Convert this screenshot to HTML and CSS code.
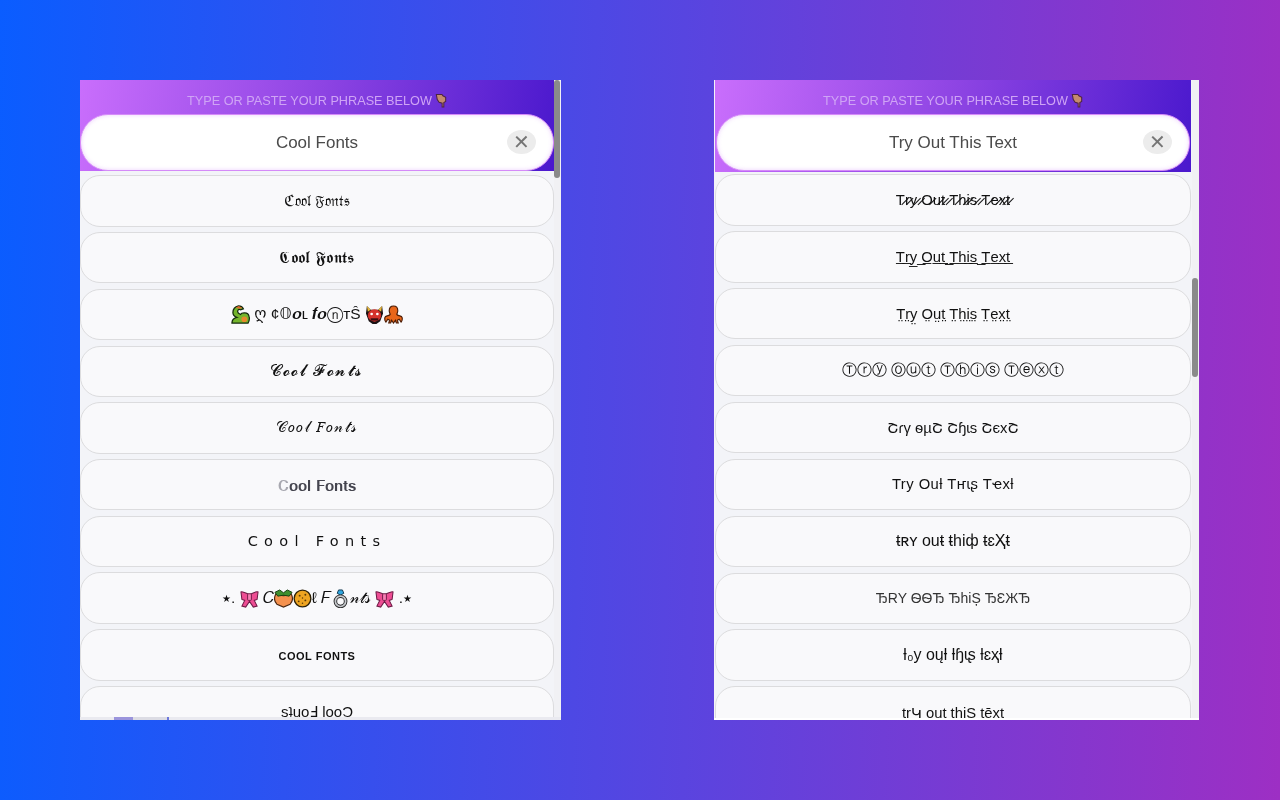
FILE: index.html
```html
<!DOCTYPE html>
<html lang="en">
<head>
<meta charset="utf-8">
<title>Cool Fonts</title>
<link rel="stylesheet" href="styles.css">
</head>
<body>
<svg class="defs" aria-hidden="true" width="0" height="0">
  <symbol id="hand" viewBox="0 0 12 16"><path d="M1 1.500h6l1 1.500 3 1.500V9l-2 1.200V15H7.200v-4.200L4 10 2 7z" fill="#c58a6e" stroke="#4d2440" stroke-width="1.1"/></symbol>
  <symbol id="dragon" viewBox="0 0 20 20"><path d="M1 19c0-3 1-5 5-6-3-1-4-3-4-5 0-3 2-6 6-7 2 0 4 1 5 3l-3 1c-2-1-3 0-3 2 0 1 1 2 3 3 1-2 8-3 9 2 1 3 0 5-1 7z" fill="#74b52c" stroke="#12280a" stroke-width="1.3"/><path d="M5 3l3-2 4 2-3 1z" fill="#e0642a"/><circle cx="14" cy="15" r="3" fill="#e8892b"/></symbol>
  <symbol id="ogre" viewBox="0 0 20 20"><path d="M2 1l4 4h8l4-4 1 8-3 8-4 3H8l-4-3-3-8z" fill="#1a1214"/><path d="M2 1l4 4-3 2zM18 1l-4 4 3 2z" fill="#e9b83a"/><ellipse cx="10" cy="11" rx="7" ry="6.500" fill="#d4322c"/><circle cx="7" cy="9.500" r="1.400" fill="#fff"/><circle cx="13" cy="9.500" r="1.400" fill="#fff"/><path d="M6 14h8v2.400H6z" fill="#3a0d10"/></symbol>
  <symbol id="octopus" viewBox="0 0 20 20"><path d="M10 1c3 0 4.500 2 4.500 5 0 2-1 3-1 4 2 2 5 1 5.500 3 .5 2 0 4-1 5l-2-3-2 1 1 3-2 0-1-3-2 3-2-3-1 3-2 0 1-3-2-1-2 3c-1-1-1.500-3-1-5 .5-2 3.500-1 5.500-3 0-1-1-2-1-4 0-3 1.500-5 4.500-5z" fill="#e8661a" stroke="#4a1c06" stroke-width="1.200"/></symbol>
  <symbol id="bow" viewBox="0 0 20 20"><path d="M10 6C7 5 3 2 1 3l1 8 3 1-3 6 4 1 4-6 4 6 4-1-3-6 3-1 1-8c-2-1-6 2-9 3z" fill="#ee4d93" stroke="#6d1a45" stroke-width="1.100"/><rect x="8" y="5" width="4" height="7" rx="1" fill="#f77fb4" stroke="#6d1a45"/></symbol>
  <symbol id="peach" viewBox="0 0 20 20"><path d="M2 5c2 1 5 2 8 2s6-1 8-2c2 4 2 8-1 11l-7 3-7-3C0 13 0 9 2 5z" fill="#f4914e" stroke="#4a2610" stroke-width="1.200"/><path d="M1 3.500L6 1l4 3 4-3 5 2.500-3 4-6-1-6 1z" fill="#3f8f2f" stroke="#173f12" stroke-width="1"/></symbol>
  <symbol id="cookie" viewBox="0 0 20 20"><circle cx="10" cy="10" r="8.800" fill="#eea421" stroke="#2e2208" stroke-width="1.400"/><circle cx="7" cy="7" r="1" fill="#5a3a08"/><circle cx="13" cy="6" r="1" fill="#5a3a08"/><circle cx="13" cy="12" r="1" fill="#5a3a08"/><circle cx="6" cy="13" r="1" fill="#5a3a08"/><circle cx="10" cy="9.500" r=".8" fill="#5a3a08"/><circle cx="10" cy="15" r=".8" fill="#5a3a08"/></symbol>
  <symbol id="ring" viewBox="0 0 20 20"><path d="M6.500 4.500L8 1h4l1.500 3.500L10 6.500z" fill="#2fa6e0" stroke="#123a52"/><circle cx="10" cy="13" r="5.400" fill="none" stroke="#2e2e2e" stroke-width="3.800"/><circle cx="10" cy="13" r="5.400" fill="none" stroke="#c4c7cb" stroke-width="1.800"/></symbol>
</svg>
<main class="stage">
  <section class="panel panel-left">
    <div class="app">
      <header class="hero">
        <p class="hero-title">TYPE OR PASTE YOUR PHRASE BELOW<svg class="hand"><use href="#hand"/></svg></p>
        <div class="pill"><span class="pill-text">Cool Fonts</span><button class="clear" type="button">✕</button></div>
      </header>
      <ul class="list">
        <li class="row row-frak">ℭ𝔬𝔬𝔩 𝔉𝔬𝔫𝔱𝔰</li>
        <li class="row row-frakbold">𝕮𝖔𝖔𝖑 𝕱𝖔𝖓𝖙𝖘</li>
        <li class="row row-mix"><svg class="emo"><use href="#dragon"/></svg> ღ ¢𝕆𝒐ʟ 𝒇𝒐ⓝᴛŜ <svg class="emo"><use href="#ogre"/></svg> <svg class="emo"><use href="#octopus"/></svg></li>
        <li class="row row-script">𝓒𝓸𝓸𝓵 𝓕𝓸𝓷𝓽𝓼</li>
        <li class="row row-script row-script-light">𝒞𝑜𝑜𝓁 𝐹𝑜𝓃𝓉𝓈</li>
        <li class="row row-shade"><span class="fade">𝐂</span>𝐨𝐨𝐥 𝐅𝐨𝐧𝐭𝐬</li>
        <li class="row row-wide">Cool Fonts</li>
        <li class="row row-mix"><span class="star">★</span>. <svg class="emo"><use href="#bow"/></svg> 𝐶<svg class="emo"><use href="#peach"/></svg><svg class="emo"><use href="#cookie"/></svg>ℓ 𝐹<svg class="emo"><use href="#ring"/></svg>𝓃𝓉𝓈 <svg class="emo"><use href="#bow"/></svg> .<span class="star">★</span></li>
        <li class="row row-small">COOL FONTS</li>
        <li class="row row-flip">sʇuoℲ looƆ</li>
      </ul>
    </div>
    <div class="track"><div class="thumb"></div></div>
    <div class="strip"></div>
  </section>

  <section class="panel panel-right">
    <div class="app">
      <header class="hero">
        <p class="hero-title">TYPE OR PASTE YOUR PHRASE BELOW<svg class="hand"><use href="#hand"/></svg></p>
        <div class="pill"><span class="pill-text">Try Out This Text</span><button class="clear" type="button">✕</button></div>
      </header>
      <ul class="list">
        <li class="row">T̷r̷y̷ ̷O̷u̷t̷ ̷T̷h̷i̷s̷ ̷T̷e̷x̷t̷</li>
        <li class="row">T̲r̲y̲ ̲O̲u̲t̲ ̲T̲h̲i̲s̲ ̲T̲e̲x̲t̲</li>
        <li class="row">T̤r̤y̤ O̤ṳt̤ T̤h̤i̤s̤ T̤e̤x̤t̤</li>
        <li class="row">Ⓣⓡⓨ Ⓞⓤⓣ Ⓣⓗⓘⓢ Ⓣⓔⓧⓣ</li>
        <li class="row">Շɾγ ѳµՇ Շɧɩs ՇєxՇ</li>
        <li class="row row-roomy">Try Ouƚ Tҥɩʂ Tҽxƚ</li>
        <li class="row row-big">ŧʀʏ ouŧ ŧhiф ŧɛҲŧ</li>
        <li class="row row-thin">ЂRY ѲѲЂ ЂhiȘ ЂƐЖЂ</li>
        <li class="row row-big">ƚ₀y oųƚ ƚɧɩʂ ƚɛҳƚ</li>
        <li class="row">trԿ out thiS tēxt</li>
      </ul>
    </div>
    <div class="track"><div class="thumb"></div></div>
    <div class="strip"></div>
  </section>
</main>
</body>
</html>
```
FILE: styles.css
```css
* { box-sizing: border-box; }
html, body { margin: 0; padding: 0; height: 100%; }
body { overflow: hidden; font-family: "Liberation Sans", "DejaVu Sans", "Noto Sans", sans-serif; }
.defs { position: absolute; }

.stage {
  width: 1280px;
  height: 800px;
  padding: 80px 0 80px 80px;
  display: flex;
  gap: 153px;
  background: linear-gradient(92deg, #0a5dff 0%, #9d2fc4 100%);
}

.panel {
  position: relative;
  height: 640px;
  display: flex;
  background: #f3f4f8;
  overflow: hidden;
  filter: blur(.3px);
}
.panel-left { width: 481px; }
.panel-right { width: 485px; padding-left: 1px; }

.app { display: flex; flex-direction: column; min-width: 0; }
.panel-left .app { width: 474px; }
.panel-right .app { width: 477px; }

.hero {
  height: 91px;
  flex: none;
  display: flex;
  flex-direction: column;
  background: linear-gradient(100deg, #c96efc 0%, #8d44e3 50%, #4a18cd 100%);
}
.panel-right .hero { height: 92px; }

.hero-title {
  margin: 0;
  height: 34px;
  padding-top: 14px;
  display: flex;
  justify-content: center;
  align-items: flex-start;
  gap: 3px;
  font-size: 12.7px;
  line-height: 15px;
  color: #cfa4f5;
  white-space: pre;
}
.hand { width: 12px; height: 15px; flex: none; margin-top: -1px; }

.pill {
  height: 57px;
  flex: none;
  display: flex;
  align-items: center;
  justify-content: center;
  position: relative;
  background: #fff;
  border: 1px solid #d58bf8;
  border-radius: 28px;
  box-shadow: inset 0 0 4px rgba(200, 120, 250, .35);
}
.panel-right .pill { margin: 0 1px; }
.pill-text { font-size: 17px; color: #4b4b4b; }
.clear {
  position: absolute;
  right: 17px;
  top: 15px;
  width: 29px;
  height: 24px;
  padding: 0;
  border: 0;
  border-radius: 50%;
  background: #ececec;
  color: #757575;
  font: bold 20px/24px "DejaVu Sans", sans-serif;
  text-align: center;
}

.list {
  margin: 0;
  padding: 4.3px 0 0;
  list-style: none;
  display: flex;
  flex-direction: column;
  gap: 5.35px;
}
.panel-right .list { padding-top: 2.3px; gap: 5.5px; }

.row {
  height: 51.4px;
  flex: none;
  display: flex;
  align-items: center;
  justify-content: center;
  background: #f9f9fb;
  border: 1px solid #dcdcde;
  border-radius: 20px;
  font-size: 14.8px;
  color: #111;
  white-space: pre;
}
.emo { width: 19px; height: 19px; flex: none; }
.star { font-size: 10px; }
.row-frak { font-size: 15.4px; }
.row-frakbold { font-size: 16px; letter-spacing: .4px; }
.row-mix { font-size: 15.5px; }
.row-script { font-size: 15.5px; letter-spacing: 1.5px; }
.row-script-light { font-size: 14.5px; letter-spacing: 1.2px; }
.row-shade { font-family: "DejaVu Serif", serif; font-size: 15px; color: #44444e; padding-top: 2px; }
.fade { color: #a8a8b0; }
.row-wide { font-family: "DejaVu Sans", sans-serif; font-size: 14.5px; letter-spacing: 6.3px; }
.row-small { font-size: 11px; font-weight: bold; letter-spacing: .5px; padding-top: 2px; }
.row-flip { font-size: 15px; }
.row-roomy { letter-spacing: .45px; }
.row-big { font-size: 16px; }
.row-thin { font-size: 14px; color: #333; }

.track { width: 7px; flex: none; background: #f1f1f4; }
.panel-right .track { width: 7px; margin-left: 1px; }
.thumb { width: 6px; height: 98px; background: #8a8a8a; border-radius: 3px; }
.panel-right .thumb { margin-top: 198px; height: 99px; }

.strip {
  position: absolute;
  left: 0;
  right: 0;
  bottom: 0;
  height: 3px;
  background: linear-gradient(90deg, #eaeaf0 7%, #9a94dc 7%, #9a94dc 11%, #dcdce4 11%, #dcdce4 18%, #6d78dc 18%, #6d78dc 18.6%, #eaeaf0 18.6%);
}
.panel-right .strip { background: #fff; height: 2px; }
```
